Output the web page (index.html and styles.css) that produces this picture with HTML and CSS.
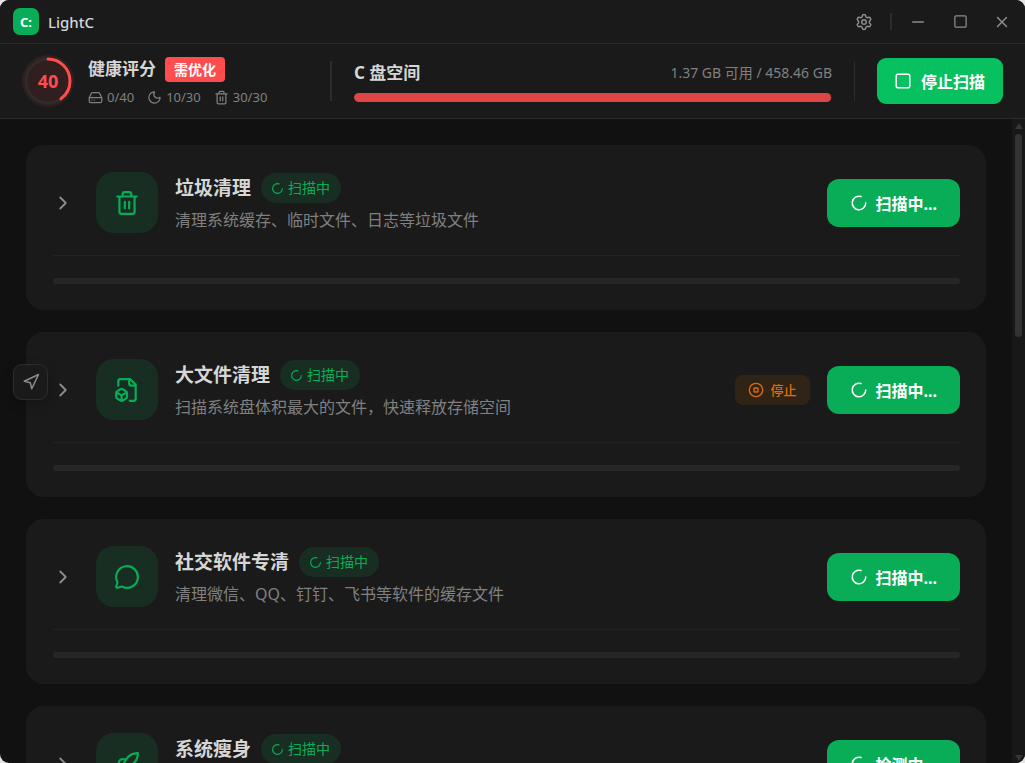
FILE: index.html
```html
<!DOCTYPE html>
<html lang="zh-CN">
<head>
<meta charset="utf-8">
<meta name="viewport" content="width=device-width, initial-scale=1">
<title>LightC</title>
<link rel="stylesheet" href="styles.css">
</head>
<body>
<svg class="sprite" aria-hidden="true">
  <symbol id="i-loader" viewBox="0 0 24 24"><path d="M21 12a9 9 0 1 1-6.219-8.56"/></symbol>
  <symbol id="i-chevron" viewBox="0 0 24 24"><path d="m9 18 6-6-6-6"/></symbol>
  <symbol id="i-square" viewBox="0 0 24 24"><rect x="3" y="3" width="18" height="18" rx="2"/></symbol>
  <symbol id="i-trash" viewBox="0 0 24 24"><path d="M3 6h18M19 6v14a2 2 0 0 1-2 2H7a2 2 0 0 1-2-2V6M8 6V4a2 2 0 0 1 2-2h4a2 2 0 0 1 2 2v2M10 11v6M14 11v6"/></symbol>
</svg>
<div class="window">
  <header class="titlebar">
    <div class="brand"><span class="logo">C:</span><span class="app-name">LightC</span></div>
    <div class="window-controls">
      <button class="control" type="button" aria-label="设置"><svg class="icon icon-18" viewBox="0 0 24 24"><path d="M9.671 4.136a2.34 2.34 0 0 1 4.659 0 2.34 2.34 0 0 0 3.319 1.915 2.34 2.34 0 0 1 2.33 4.033 2.34 2.34 0 0 0 0 3.831 2.34 2.34 0 0 1-2.33 4.033 2.34 2.34 0 0 0-3.319 1.915 2.34 2.34 0 0 1-4.659 0 2.34 2.34 0 0 0-3.32-1.915 2.34 2.34 0 0 1-2.33-4.033 2.34 2.34 0 0 0 0-3.831A2.34 2.34 0 0 1 6.35 6.051a2.34 2.34 0 0 0 3.319-1.915"/><circle cx="12" cy="12" r="3"/></svg></button>
      <span class="control-divider"></span>
      <button class="control" type="button" aria-label="最小化"><svg class="icon icon-18" viewBox="0 0 24 24"><path d="M5 12h14"/></svg></button>
      <button class="control" type="button" aria-label="最大化"><svg class="icon icon-15"><use href="#i-square"/></svg></button>
      <button class="control" type="button" aria-label="关闭"><svg class="icon icon-18" viewBox="0 0 24 24"><path d="M18 6 6 18M6 6l12 12"/></svg></button>
    </div>
  </header>

  <section class="overview">
    <div class="health">
      <div class="score">
        <svg class="score-ring" viewBox="0 0 52 52" aria-hidden="true">
          <circle class="ring-halo" cx="26" cy="26" r="26"/>
          <circle class="ring-track" cx="26" cy="26" r="22"/>
          <circle class="ring-value" cx="26" cy="26" r="22" pathLength="100" stroke-dasharray="40 100" transform="rotate(-90 26 26)"/>
        </svg>
        <span class="score-value">40</span>
      </div>
      <div class="health-info">
        <div class="health-title"><h1 class="heading">健康评分</h1><span class="tag">需优化</span></div>
        <div class="stats">
          <span class="stat"><svg class="icon icon-15" viewBox="0 0 24 24"><path d="M22 12H2M5.45 5.11 2 12v6a2 2 0 0 0 2 2h16a2 2 0 0 0 2-2v-6l-3.45-6.89A2 2 0 0 0 16.76 4H7.24a2 2 0 0 0-1.79 1.11zM6 16h.01M10 16h.01"/></svg>0/40</span>
          <span class="stat"><svg class="icon icon-15" viewBox="0 0 24 24"><path d="M20.985 12.486a9 9 0 1 1-9.473-9.472c.405-.022.617.46.402.803a6 6 0 0 0 8.268 8.268c.344-.215.825-.004.803.401"/></svg>10/30</span>
          <span class="stat"><svg class="icon icon-15"><use href="#i-trash"/></svg>30/30</span>
        </div>
      </div>
    </div>
    <span class="divider divider-thick"></span>
    <div class="disk">
      <div class="disk-head"><h2 class="heading">C 盘空间</h2><span class="disk-size">1.37 GB 可用 / 458.46 GB</span></div>
      <div class="disk-bar"><div class="disk-used" style="width:99.7%"></div></div>
    </div>
    <span class="divider"></span>
    <button class="stop-all" type="button"><svg class="icon icon-18"><use href="#i-square"/></svg>停止扫描</button>
  </section>

  <div class="body">
    <main class="modules">
      <article class="card">
        <div class="card-row">
          <button class="expand" type="button" aria-label="展开"><svg class="icon icon-22"><use href="#i-chevron"/></svg></button>
          <div class="tile"><svg class="icon icon-26"><use href="#i-trash"/></svg></div>
          <div class="card-text">
            <div class="card-head"><h3 class="card-title">垃圾清理</h3><span class="badge"><svg class="icon icon-13"><use href="#i-loader"/></svg>扫描中</span></div>
            <p class="card-desc">清理系统缓存、临时文件、日志等垃圾文件</p>
          </div>
          <button class="scan" type="button"><svg class="icon icon-18"><use href="#i-loader"/></svg>扫描中...</button>
        </div>
        <div class="card-progress"><div class="track"></div></div>
      </article>

      <article class="card">
        <div class="card-row">
          <button class="expand" type="button" aria-label="展开"><svg class="icon icon-22"><use href="#i-chevron"/></svg></button>
          <div class="tile"><svg class="icon icon-26" viewBox="0 0 24 24"><path d="M14.5 22H18a2 2 0 0 0 2-2V7l-5-5H6a2 2 0 0 0-2 2v4M14 2v4a2 2 0 0 0 2 2h4M3 13.1a2 2 0 0 0-1 1.76v3.24a2 2 0 0 0 .97 1.78L6 21.7a2 2 0 0 0 2.03.01L11 19.9a2 2 0 0 0 1-1.76V14.9a2 2 0 0 0-.97-1.78L8 11.3a2 2 0 0 0-2.03-.01ZM7 17v5M11.7 14.2 7 17l-4.7-2.8"/></svg></div>
          <div class="card-text">
            <div class="card-head"><h3 class="card-title">大文件清理</h3><span class="badge"><svg class="icon icon-13"><use href="#i-loader"/></svg>扫描中</span></div>
            <p class="card-desc">扫描系统盘体积最大的文件，快速释放存储空间</p>
          </div>
          <button class="stop" type="button"><svg class="icon icon-16" viewBox="0 0 24 24"><circle cx="12" cy="12" r="10"/><rect x="9" y="9" width="6" height="6" rx="1"/></svg>停止</button>
          <button class="scan" type="button"><svg class="icon icon-18"><use href="#i-loader"/></svg>扫描中...</button>
        </div>
        <div class="card-progress"><div class="track"></div></div>
      </article>

      <article class="card">
        <div class="card-row">
          <button class="expand" type="button" aria-label="展开"><svg class="icon icon-22"><use href="#i-chevron"/></svg></button>
          <div class="tile"><svg class="icon icon-26" viewBox="0 0 24 24"><path d="M2.992 16.342a2 2 0 0 1 .094 1.167l-1.065 3.29a1 1 0 0 0 1.236 1.168l3.413-.998a2 2 0 0 1 1.099.092 10 10 0 1 0-4.777-4.719"/></svg></div>
          <div class="card-text">
            <div class="card-head"><h3 class="card-title">社交软件专清</h3><span class="badge"><svg class="icon icon-13"><use href="#i-loader"/></svg>扫描中</span></div>
            <p class="card-desc">清理微信、QQ、钉钉、飞书等软件的缓存文件</p>
          </div>
          <button class="scan" type="button"><svg class="icon icon-18"><use href="#i-loader"/></svg>扫描中...</button>
        </div>
        <div class="card-progress"><div class="track"></div></div>
      </article>

      <article class="card">
        <div class="card-row">
          <button class="expand" type="button" aria-label="展开"><svg class="icon icon-22"><use href="#i-chevron"/></svg></button>
          <div class="tile"><svg class="icon icon-26" viewBox="0 0 24 24"><path d="M4.5 16.5c-1.5 1.26-2 5-2 5s3.74-.5 5-2c.71-.84.7-2.13-.09-2.91a2.18 2.18 0 0 0-2.91-.09zM12 15l-3-3a22 22 0 0 1 2-3.95A12.88 12.88 0 0 1 22 2c0 2.72-.78 7.5-6 11a22.35 22.35 0 0 1-4 2zM9 12H4s.55-3.03 2-4c1.62-1.08 5 0 5 0M12 15v5s3.03-.55 4-2c1.08-1.62 0-5 0-5"/></svg></div>
          <div class="card-text">
            <div class="card-head"><h3 class="card-title">系统瘦身</h3><span class="badge"><svg class="icon icon-13"><use href="#i-loader"/></svg>扫描中</span></div>
          </div>
          <button class="scan" type="button"><svg class="icon icon-18"><use href="#i-loader"/></svg>检测中...</button>
        </div>
        <div class="card-progress"><div class="track"></div></div>
      </article>
    </main>
    <div class="scrollbar" aria-hidden="true">
      <svg class="arrow" viewBox="0 0 8 6"><path d="M4 0 8 6H0Z"/></svg>
      <div class="rail"><div class="thumb"></div></div>
      <svg class="arrow" viewBox="0 0 8 6"><path d="M0 0h8L4 6Z"/></svg>
    </div>
  </div>
  <button class="navigator" type="button" aria-label="导航"><svg class="icon icon-18" viewBox="0 0 24 24"><path d="M3 11 22 2l-9 19-2-8-8-2z"/></svg></button>
</div>
</body>
</html>
```
FILE: styles.css
```css
* { box-sizing: border-box; }

body {
  margin: 0;
  background: #e4e4e4;
  color: #d6d6d6;
  font-family: "Noto Sans", "Noto Sans CJK SC", sans-serif;
  font-size: 16px;
}

h1, h2, h3, p { margin: 0; }

button {
  border: 0;
  padding: 0;
  background: none;
  color: inherit;
  font: inherit;
  cursor: pointer;
}

.sprite { display: none; }

.icon {
  display: block;
  flex: none;
  fill: none;
  stroke: currentColor;
  stroke-width: 2;
  stroke-linecap: round;
  stroke-linejoin: round;
}
.icon-13 { width: 13px; height: 13px; }
.icon-15 { width: 15px; height: 15px; }
.icon-16 { width: 16px; height: 16px; }
.icon-18 { width: 18px; height: 18px; }
.icon-22 { width: 22px; height: 22px; }
.icon-26 { width: 26px; height: 26px; }

.window {
  position: relative;
  display: flex;
  flex-direction: column;
  height: 100vh;
  overflow: hidden;
  border-radius: 9px;
  background: #111111;
}

/* Title bar */
.titlebar {
  display: flex;
  flex: none;
  justify-content: space-between;
  align-items: center;
  height: 44px;
  padding: 0 2px 0 13px;
  border-bottom: 1px solid #2c2c2c;
  background: #1a1a1a;
}
.brand { display: flex; align-items: center; gap: 9px; }
.logo {
  display: grid;
  place-items: center;
  width: 26px;
  height: 27px;
  border-radius: 7px;
  background: #09ad57;
  color: #fff;
  font-size: 13px;
  font-weight: 700;
}
.app-name { font-size: 15px; font-weight: 500; line-height: 20px; }
.window-controls { display: flex; align-items: center; color: #8c8c8c; }
.control {
  display: grid;
  place-items: center;
  width: 42px;
  height: 36px;
}
.control-divider { width: 2px; height: 17px; margin: 0 5px; background: #2c2c2c; }

/* Overview */
.overview {
  display: flex;
  flex: none;
  align-items: center;
  gap: 22px;
  height: 75px;
  padding: 0 22px;
  border-bottom: 1px solid #2c2c2c;
  background: #1a1a1a;
}
.health { display: flex; align-items: center; gap: 14px; width: 286px; }
.score { display: grid; place-items: center; width: 52px; height: 52px; }
.score > * { grid-area: 1 / 1; }
.score-ring { width: 52px; height: 52px; fill: none; stroke-width: 3; }
.ring-halo { fill: #311e1e; }
.ring-track { stroke: #2d2d2d; }
.ring-value { stroke: #ff4d4f; stroke-linecap: round; }
.score-value { color: #ff4d4f; font-size: 18px; font-weight: 700; }
.health-info { display: flex; flex-direction: column; gap: 6px; }
.health-title { display: flex; align-items: center; gap: 9px; }
.heading { font-size: 17px; font-weight: 700; line-height: 26px; white-space: nowrap; }
.tag {
  padding: 0 9px;
  border-radius: 4px;
  background: #ff4d4f;
  color: #fff;
  font-size: 14px;
  font-weight: 700;
  line-height: 25px;
}
.stats { display: flex; gap: 13px; color: #808080; font-size: 13px; line-height: 18px; }
.stat { display: flex; align-items: center; gap: 4px; }
.divider { flex: none; width: 1px; height: 40px; background: #2c2c2c; }
.divider-thick { width: 2px; }
.disk { display: flex; flex: 1; flex-direction: column; gap: 7px; }
.disk-head { display: flex; justify-content: space-between; align-items: center; }
.disk-size { color: #808080; font-size: 14px; line-height: 26px; }
.disk-bar { height: 9px; overflow: hidden; border-radius: 5px; background: #2c2c2c; }
.disk-used { height: 100%; border-radius: 5px; background: #e04545; }
.stop-all {
  display: flex;
  align-items: center;
  gap: 9px;
  height: 46px;
  padding: 0 18px 0 17px;
  border-radius: 9px;
  background: #07c160;
  color: #fff;
  font-weight: 700;
  white-space: nowrap;
}

/* Module cards */
.body { display: flex; flex: 1; min-height: 0; }
.modules {
  display: flex;
  flex: 1;
  flex-direction: column;
  gap: 22px;
  overflow: hidden;
  padding: 26px;
}
.card {
  flex: none;
  padding: 27px 26px 26px 27px;
  border-radius: 18px;
  background: #1a1a1a;
}
.card-row { display: flex; align-items: center; gap: 17px; min-height: 61px; }
.expand {
  display: grid;
  place-items: center;
  justify-content: center;
  width: 20px;
  height: 22px;
  margin-right: 6px;
  color: #8c8c8c;
}
.tile {
  display: grid;
  flex: none;
  place-items: center;
  width: 62px;
  height: 61px;
  border-radius: 18px;
  background: #182e22;
  color: #09ad57;
}
.card-text {
  display: flex;
  flex: 1;
  flex-direction: column;
  gap: 5px;
  min-height: 59px;
}
.card-head { display: flex; align-items: center; gap: 10px; }
.card-title { font-size: 19px; font-weight: 700; line-height: 28px; }
.badge {
  display: flex;
  align-items: center;
  gap: 4px;
  height: 30px;
  padding: 0 11px 0 10px;
  border-radius: 15px;
  background: #182e22;
  color: #09ad57;
  font-size: 14px;
  line-height: 20px;
}
.card-desc { color: #808080; line-height: 24px; }
.scan {
  display: flex;
  align-items: center;
  gap: 8px;
  height: 48px;
  padding: 0 23px;
  border-radius: 12px;
  background: #09ad57;
  color: #fff;
  font-weight: 700;
}
.stop {
  display: flex;
  align-items: center;
  gap: 6px;
  height: 30px;
  padding: 0 13px;
  border-radius: 8px;
  background: #2f2416;
  color: #e06c08;
  font-size: 13px;
  font-weight: 500;
}
.card-progress {
  margin-top: 22px;
  padding-top: 22px;
  border-top: 1px solid #232323;
}
.track { height: 6px; border-radius: 3px; background: #262626; }

/* Scrollbar */
.scrollbar {
  display: flex;
  flex-direction: column;
  align-items: center;
  gap: 5px;
  width: 13px;
  padding: 4px 0 2px;
  background: #181818;
}
.arrow { flex: none; width: 8px; height: 6px; fill: #363636; }
.rail { flex: 1; width: 7px; }
.thumb { height: 33%; border-radius: 4px; background: #333333; }

/* Floating navigator */
.navigator {
  position: absolute;
  top: 364px;
  left: 13px;
  display: grid;
  place-items: center;
  width: 35px;
  height: 36px;
  border: 1px solid #2c2c2c;
  border-radius: 9px;
  background: #1a1a1a;
  box-shadow: 0 4px 12px rgba(0, 0, 0, 0.2);
  color: #8c8c8c;
}
```
